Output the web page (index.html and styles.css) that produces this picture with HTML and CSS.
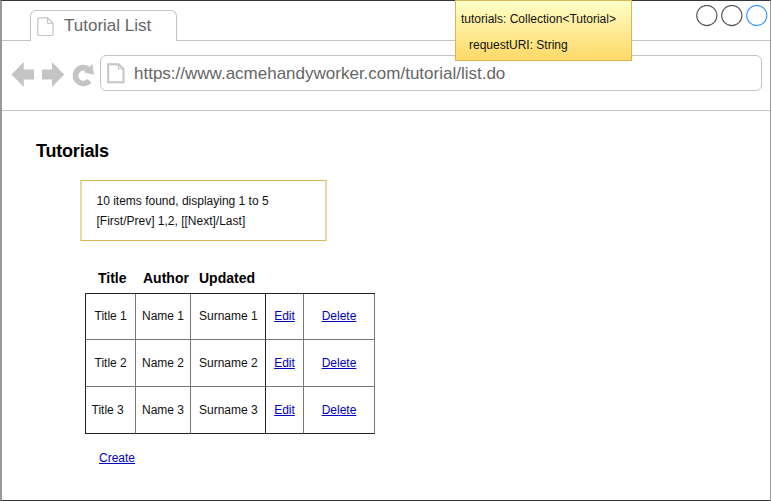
FILE: index.html
```html
<!DOCTYPE html>
<html lang="en">
<head>
<meta charset="utf-8">
<title>Tutorial List</title>
<link rel="stylesheet" href="styles.css">
</head>
<body>
<div class="window">
  <header class="tabs">
    <div class="tab">
      <svg class="tab-icon" width="17" height="20" viewBox="0 0 17 20"><path d="M2 .8H10.500L16 6.500V17.300Q16 18.500 15 18.500H2Q.8 18.500 .8 17.300V2Q.8 .8 2 .8Z M10.500 .8V5.500Q10.500 6.500 11.500 6.500H16"/></svg>
      <span class="tab-title">Tutorial List</span>
    </div>
    <div class="controls"><svg width="72" height="22" viewBox="0 0 72 22"><circle cx="10.800" cy="10.500" r="10.100"/><circle cx="35.800" cy="10.500" r="10.100"/><circle class="active" cx="60.800" cy="10.500" r="10.100"/></svg></div>
  </header>
  <nav class="toolbar">
    <svg class="nav-icons" width="86" height="30" viewBox="0 0 86 30">
      <path d="M1.500 13.500L13.800 1V8.500H24V18.500H13.800V26Z"/>
      <path d="M54.200 13.500L42 1V8.500H31.900V18.500H42V26Z"/>
      <path d="M79.400 19.700A7.900 7.900 0 1 1 78.800 8.800" class="ring"/>
      <path d="M82.500 3L84 13.700L73.800 11.300Z"/>
    </svg>
    <div class="address">
      <svg width="18" height="21" viewBox="0 0 18 21"><path d="M1.200 1.200H11.500L16.500 6V19.300H1.200Z" class="page"/><path d="M11.500 1.200V6H16.500" class="fold"/></svg>
      <span class="url">https://www.acmehandyworker.com/tutorial/list.do</span>
    </div>
  </nav>
  <main>
    <h1>Tutorials</h1>
    <div class="pager"><p>10 items found, displaying 1 to 5</p><p>[First/Prev] 1,2, [[Next]/Last]</p></div>
    <table>
      <colgroup><col class="c-title"><col class="c-author"><col class="c-updated"><col class="c-edit"><col class="c-delete"></colgroup>
      <thead><tr><th>Title</th><th>Author</th><th>Updated</th><th></th><th></th></tr></thead>
      <tbody>
        <tr><td>Title 1</td><td>Name 1</td><td>Surname 1</td><td><a href="#">Edit</a></td><td><a href="#">Delete</a></td></tr>
        <tr><td>Title 2</td><td>Name 2</td><td>Surname 2</td><td><a href="#">Edit</a></td><td><a href="#">Delete</a></td></tr>
        <tr><td class="near">Title 3</td><td>Name 3</td><td>Surname 3</td><td><a href="#">Edit</a></td><td><a href="#">Delete</a></td></tr>
      </tbody>
    </table>
    <a class="create" href="#">Create</a>
  </main>
  <aside class="note"><p>tutorials: Collection&lt;Tutorial&gt;</p><p class="indent">requestURI: String</p></aside>
</div>
</body>
</html>
```
FILE: styles.css
```css
* { box-sizing: border-box; }
body { margin: 0; font: 12px/20px "Liberation Sans", Arial, sans-serif; color: #111; background: #fff; overflow: hidden; }
p, h1 { margin: 0; }
.window { position: relative; width: 771px; height: 501px; border: solid; border-width: 1px 1px 1px 2px; border-color: #36353d #999 #36353d #999; }
.tabs { display: flex; justify-content: space-between; height: 40px; border-bottom: 1px solid #c4c4c4; padding-left: 28px; }
.tab { display: flex; width: 147px; height: 31px; margin-top: 9px; border: 1px solid #c4c4c4; border-bottom: 0; border-radius: 6px 6px 0 0; background: #fff; }
.tab-icon { margin: 6px 0 0 6px; fill: none; stroke: #c4c4c4; stroke-width: 1.2; }
.tab-title { margin: 5px 0 0 10px; font-size: 17px; color: #666; white-space: nowrap; }
.controls { margin: 4px 2px 0 0; }
.controls svg { display: block; fill: none; stroke: #555; stroke-width: 1.1; }
.controls .active { stroke: #3399ff; }
.toolbar { display: flex; height: 70px; border-bottom: 1px solid #c4c4c4; padding: 14px 8px 0 8px; }
.nav-icons { margin-top: 6px; fill: #c4c4c4; flex: none; }
.nav-icons .ring { fill: none; stroke: #c4c4c4; stroke-width: 5.6; }
.address { display: flex; width: 662px; height: 36px; margin-left: 4px; border: 1px solid #c4c4c4; border-radius: 6px; flex: none; }
.address svg { margin: 7px 0 0 6px; fill: none; }
.page { stroke: #c4c4c4; stroke-width: 2; }
.fold { stroke: #c4c4c4; stroke-width: 1.2; }
.url { margin: 8px 0 0 9px; font-size: 17px; color: #666; white-space: nowrap; }
main { padding: 29px 0 0 34px; }
h1 { font-size: 18px; line-height: 22px; letter-spacing: -0.2px; color: #000; }
.pager { width: 247px; height: 61px; margin: 18px 0 0 44px; padding: 10px 14.500px; border: solid; border-width: 1px 2px; border-color: #d6b656 #e9d8a2; }
table { table-layout: fixed; width: 290px; margin: 22px 0 0 49px; border-collapse: separate; border-spacing: 0; }
.c-title { width: 51px; }
.c-author { width: 55px; }
.c-updated { width: 75px; }
.c-edit { width: 38px; }
.c-delete { width: 71px; }
th { height: 31px; padding: 0 0 1px 8px; border-bottom: 1px solid #222; text-align: left; font-size: 14px; color: #000; white-space: nowrap; }
th:first-child { padding-left: 13px; }
th:nth-child(2) { padding-left: 7px; }
td { height: 47px; padding: 0; border-right: 1px solid #777; border-bottom: 1px solid #777; white-space: nowrap; }
tbody tr:first-child td { height: 46px; padding-bottom: 1px; }
tbody tr:last-child td { border-bottom-color: #222; }
td:first-child { border-left: 1px solid #222; padding-left: 8.500px; }
td.near:first-child { padding-left: 5.500px; }
td:nth-child(2) { padding-left: 6px; }
td:nth-child(3) { padding-left: 8px; border-right-color: #222; }
td:nth-child(4), td:nth-child(5) { text-align: center; }
a { color: #0000c0; }
.create { display: inline-block; margin: 14px 0 0 63px; }
.note { position: absolute; left: 453px; top: -1px; width: 177px; height: 61px; padding: 8px 5px; border: 1px solid #d6b656; background: linear-gradient(#ffffc8, #ffd966); }
.note p { height: 26px; white-space: nowrap; }
.note .indent { padding-left: 8px; }
```
